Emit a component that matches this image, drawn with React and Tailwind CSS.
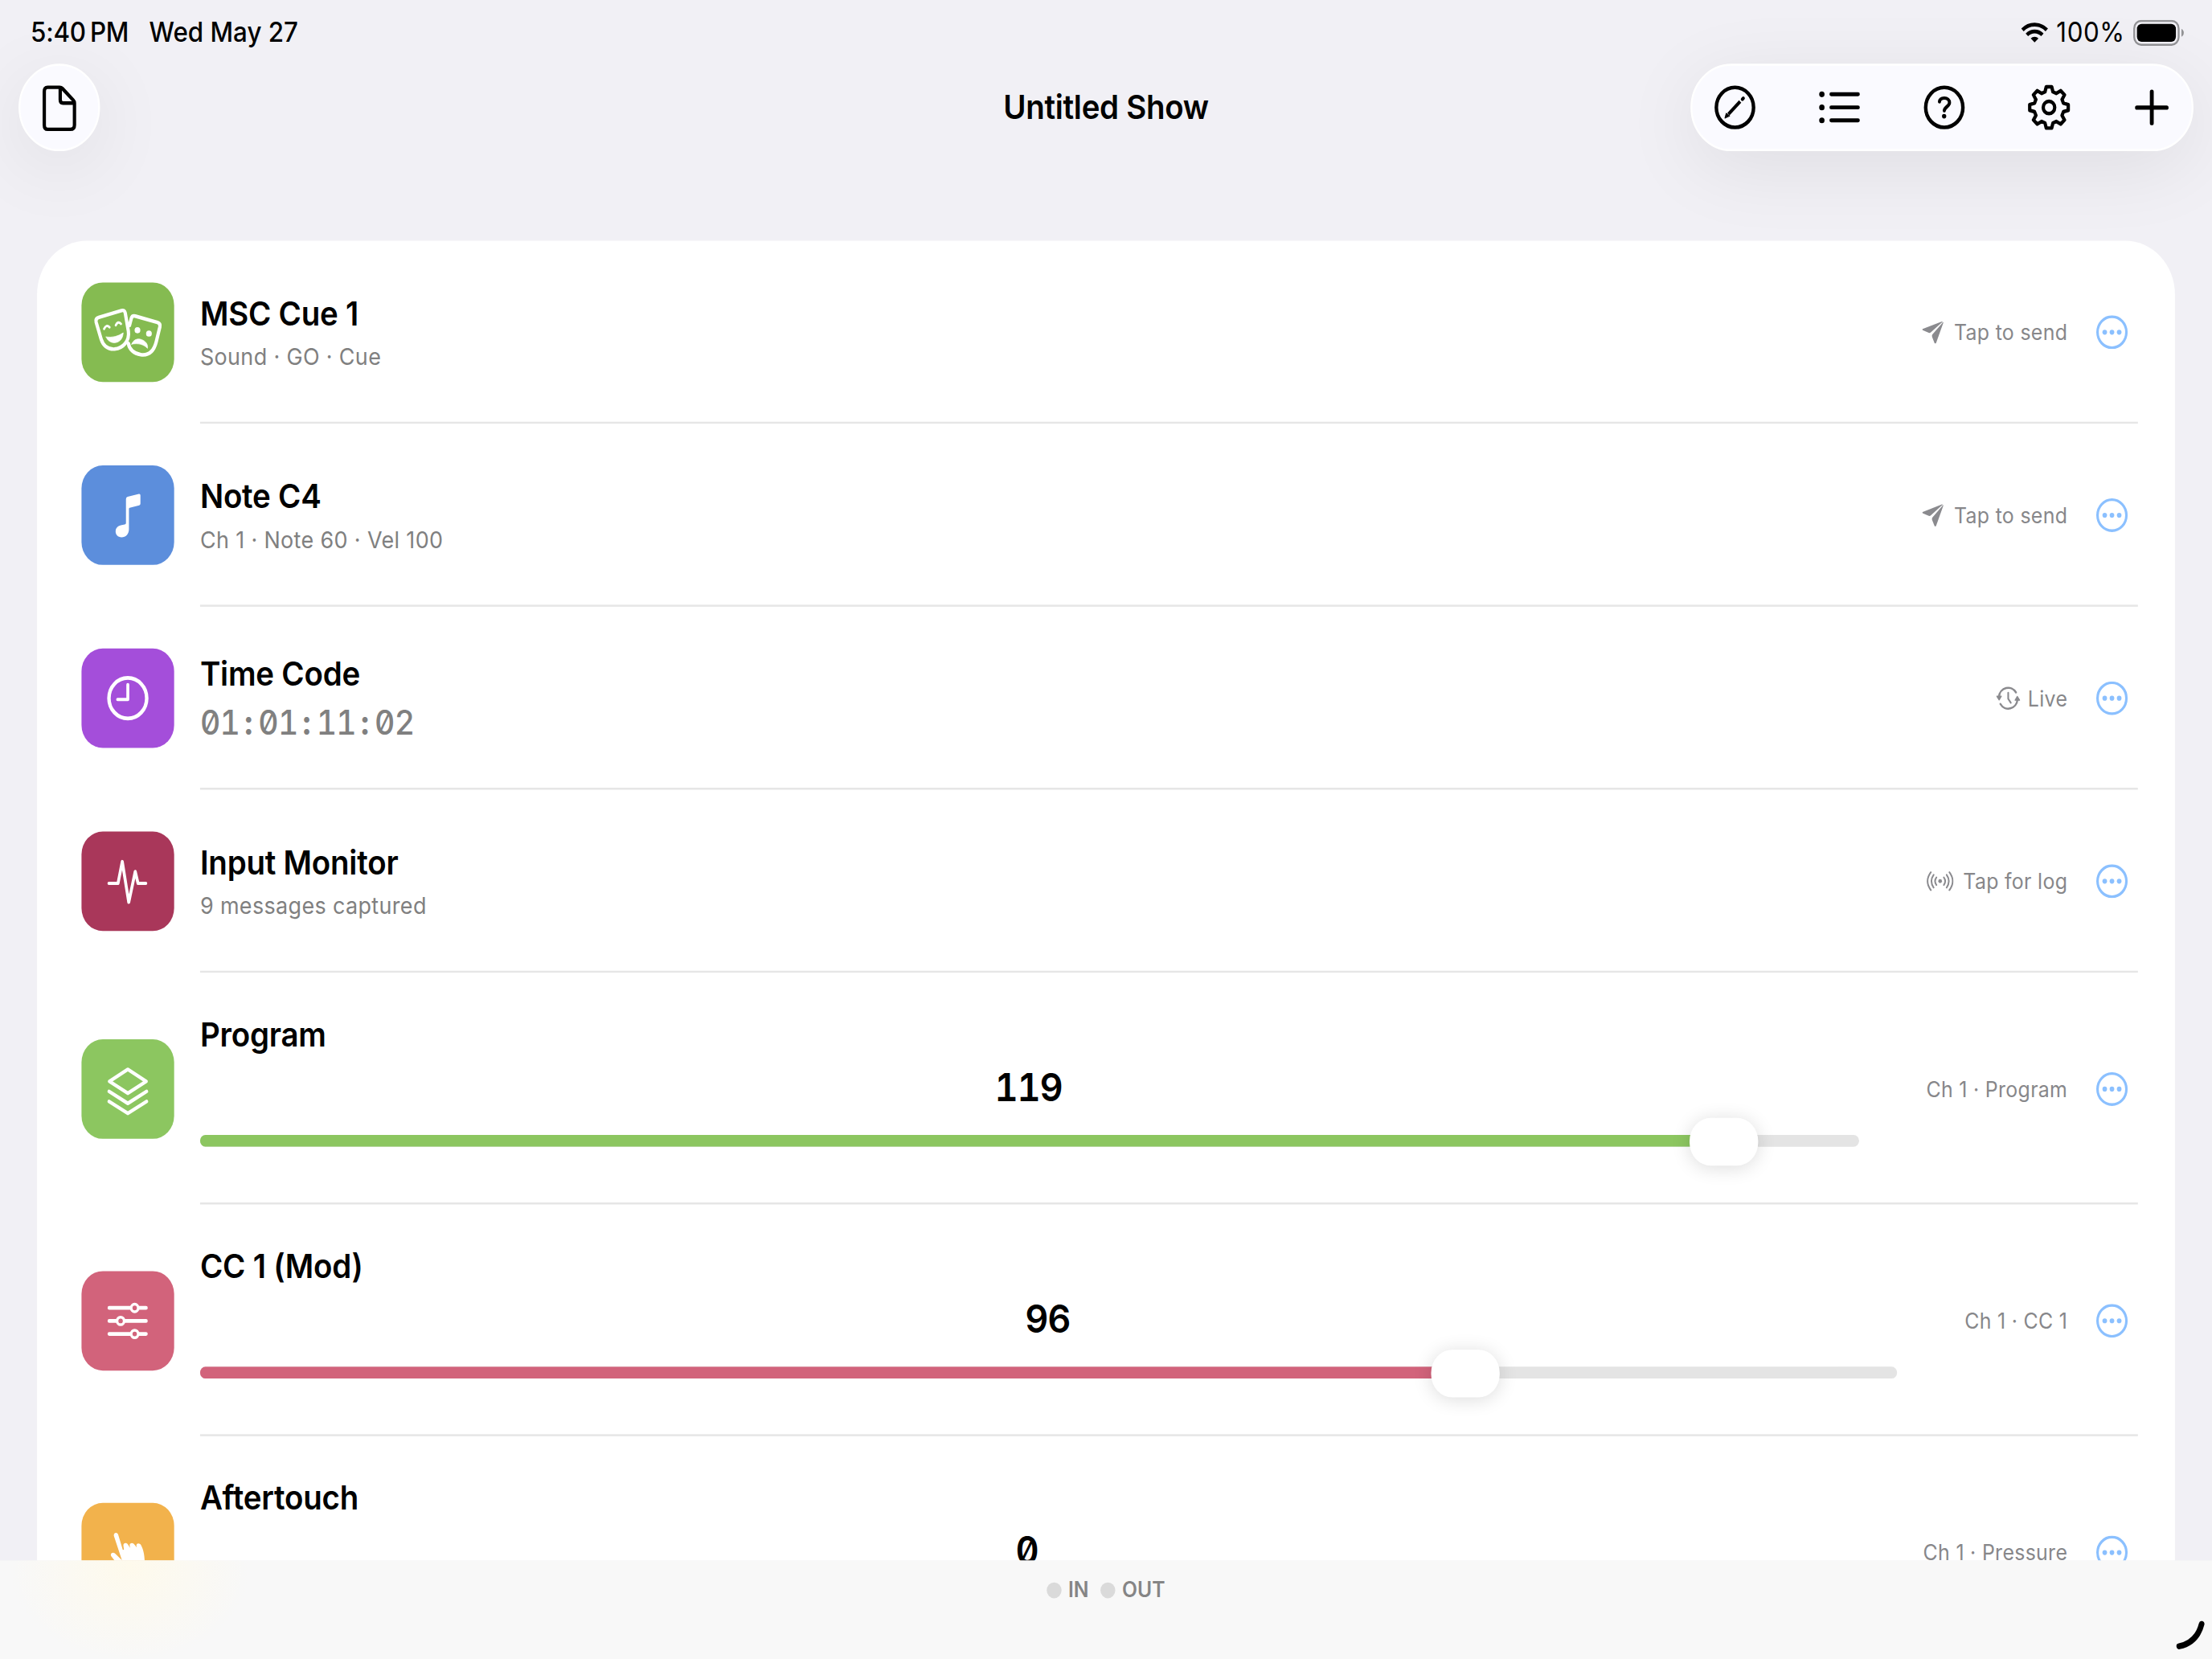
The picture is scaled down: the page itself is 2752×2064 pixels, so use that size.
const gearPoints = Array.from({ length: 8 }, (_, i) =>
  [
    [-15.5, 8.1],
    [-8, 10.5],
    [8, 10.5],
    [15.5, 8.1]
  ].map(([offset, r]) => {
    const a = ((i * 45 + offset) * Math.PI) / 180;
    return `${(12 + r * Math.sin(a)).toFixed(2)},${(12 - r * Math.cos(a)).toFixed(2)}`;
  }).join(' ')
).join(' ');

const WifiIcon = () => (
  <svg className="w-[29px] h-[21px]" viewBox="0 0 14.6 10.4" fill="none" stroke="black" strokeWidth="1.9">
    <path d="M0.7 4A9.4 9.4 0 0 1 13.9 4" />
    <path d="M3.1 6.5A6 6 0 0 1 11.5 6.5" />
    <path d="M7.3 10.3L5.2 8.3A3 3 0 0 1 9.4 8.3Z" fill="black" stroke="none" />
  </svg>
);

const BatteryIcon = () => (
  <svg className="w-[55px] h-[26px]" viewBox="0 0 27.5 13" fill="none">
    <rect x="0.5" y="0.5" width="24" height="12" rx="3.8" stroke="#939396" />
    <rect x="2" y="2" width="21" height="9" rx="2.5" fill="black" />
    <path d="M26 4.5A2.2 2.2 0 0 1 26 8.5Z" fill="#939396" />
  </svg>
);

const DocIcon = () => (
  <svg className="w-12 h-12" viewBox="0 0 24 24" fill="none" stroke="black" strokeWidth="1.8" strokeLinejoin="round">
    <path d="M5.7 1.9H12.2Q13.1 1.9 13.7 2.5L19.6 8.4Q20.2 9 20.2 9.9V20.8Q20.2 23 18 23H5.7Q3.9 23 3.9 20.8V4.1Q3.9 1.9 5.7 1.9Z" />
    <path d="M12.5 2V8.1Q12.5 9.8 14 9.8H20" />
  </svg>
);

const PencilCircleIcon = () => (
  <svg className="w-12 h-12" viewBox="0 0 24 24" fill="none" stroke="black" strokeWidth="1.9" strokeLinecap="round">
    <circle cx="12" cy="12" r="10.05" />
    <path d="M8.5 15.4L14.8 9" strokeWidth="1.7" strokeLinecap="butt" />
    <path d="M6.6 17.3L7.3 14.9L9.1 16.2Z" fill="black" stroke="black" strokeWidth="0.4" strokeLinejoin="round" />
    <path d="M16 7.9L16.5 7.4" strokeWidth="1.7" />
  </svg>
);

const ListIcon = () => (
  <svg className="w-12 h-12" viewBox="0 0 24 24" fill="none" stroke="black" strokeLinecap="round">
    <path d="M7.5 5.4H21.9M7.5 12H21.9M7.5 18.5H21.9" strokeWidth="2" />
    <path d="M2.4 5.4H2.41M2.4 12H2.41M2.4 18.5H2.41" strokeWidth="2.9" />
  </svg>
);

const HelpIcon = () => (
  <svg className="w-12 h-12" viewBox="0 0 24 24" fill="none" stroke="black" strokeWidth="1.9" strokeLinecap="round">
    <circle cx="12" cy="12" r="10.05" />
    <path d="M9.4 9.2C9.5 7.9 10.6 7.3 12 7.3C13.6 7.3 14.8 8.2 14.8 9.6C14.8 11.5 12 11.8 12 13.7" strokeWidth="1.7" />
    <circle cx="11.9" cy="16.4" r="1.15" fill="black" stroke="none" />
  </svg>
);

const GearIcon = () => (
  <svg className="w-12 h-12" viewBox="0 0 24 24" fill="none" stroke="black" strokeWidth="1.8" strokeLinejoin="round">
    <polygon points={gearPoints} />
    <circle cx="12" cy="12" r="3.1" />
  </svg>
);

const PlusIcon = () => (
  <svg className="w-11 h-12" viewBox="1 0 22 24" fill="none" stroke="black" strokeWidth="2.1" strokeLinecap="round">
    <path d="M12 4.1V19.9M4 12.1H20" />
  </svg>
);

const MasksIcon = () => (
  <g fill="none" stroke="white" strokeWidth="1.8" strokeLinejoin="round" strokeLinecap="round">
    <path d="M9.3 17.6L21.6 14.1Q23.3 13.7 23.6 15.3L25.3 24.5C26 29.3 22.6 33 17.8 33.5C14 33.7 11.6 31.5 10.6 28.5L7.9 20Q7.4 18.2 9.3 17.6Z" />
    <path d="M25.9 21.6L26.9 18Q27.4 16.5 29 16.9L41 20.1Q42.7 20.6 42.3 22.3L40.3 30C39 34.7 36 36.8 32 36.3C28.3 35.8 25.7 33.6 25.3 30.6" />
    <path d="M12.2 23.3Q13.4 20.9 15.1 22.5M18.5 21.5Q19.7 19.1 21.3 20.8" strokeWidth="1.2" />
    <path d="M13.3 27.4Q18.5 28 22.5 25.3C22.3 28.4 20.4 30.2 17.8 30.3C15.8 30.3 14 29.2 13.3 27.4Z" fill="white" strokeWidth="0.3" />
    <path d="M27.1 31C28 28.8 30 28.1 32 28.6C34.5 29.3 36 31 35.6 33.1C33.5 31 30.5 30.4 27.1 31Z" fill="white" strokeWidth="0.3" />
    <circle cx="30.2" cy="24" r="1.55" fill="white" stroke="none" />
    <circle cx="36.4" cy="25.7" r="1.55" fill="white" stroke="none" />
  </g>
);

const NoteIcon = () => (
  <path
    fill="white"
    d="M24 16.9Q24 16 24.9 15.7L31 14.3Q31.8 14.2 31.8 15V19.2Q31.8 19.9 31.1 20.1L26 21.3Q25.6 21.4 25.6 21.8V32C25.6 34.6 23.9 36.1 21.6 36.1C19.6 36.1 18.4 34.8 18.4 33.2C18.4 31.5 19.5 30.5 21.2 30.1L23.3 29.7Q24 29.5 24 28.9Z"
  />
);

const ClockIcon = () => (
  <g fill="none" stroke="white" strokeLinecap="round" strokeLinejoin="round">
    <circle cx="25" cy="25" r="10.2" strokeWidth="1.9" />
    <path d="M25 18.2V25.6H19.5" strokeWidth="1.6" />
  </g>
);

const PulseIcon = () => (
  <path
    d="M14.8 26.1H19.7L22 15.1L25.5 35.6L29 20.1L30.5 26.1H34.7"
    fill="none"
    stroke="white"
    strokeWidth="1.6"
    strokeLinecap="round"
    strokeLinejoin="round"
  />
);

const LayersIcon = () => (
  <g fill="none" stroke="white" strokeWidth="1.8" strokeLinecap="round" strokeLinejoin="round">
    <path d="M25 15.1L34.9 21.1L25 27.1L15.1 21.1Z" />
    <path d="M14.9 26.2L25 32.2L35.1 26.2M14.9 31.2L25 37.2L35.1 31.2" />
  </g>
);

const SlidersIcon = () => (
  <g fill="#d2637b" stroke="white" strokeLinecap="round">
    <path d="M15 18.5H34.8M15 25.05H34.8M15 31.6H34.8" strokeWidth="1.9" />
    <circle cx="28.7" cy="18.5" r="1.9" strokeWidth="1.4" />
    <circle cx="21.1" cy="25.05" r="1.9" strokeWidth="1.4" />
    <circle cx="28.7" cy="31.6" r="1.9" strokeWidth="1.4" />
  </g>
);

const HandIcon = () => (
  <path
    fill="white"
    d="M17.5 16.7C17.1 15 19.2 14.4 19.8 16L22.3 23.6L22.9 23.5L22.6 21.5C22.5 20 24.3 19.8 25.1 21L26.2 22.6L26 21.3C26 19.9 27.9 19.8 28.6 21L29.8 22.4L29.6 21.4C29.7 20.1 31.4 20.1 32.1 21.2C33.4 23.3 34.1 26.5 34.1 30C34.1 34 31.5 36.5 27.5 36.5C23 36.5 20.5 33.5 18 29.2L16 26.8C15.3 25.5 16.8 24.5 18 25.4L21.8 28.8Z"
  />
);

const SendIcon = () => (
  <svg className="w-6 h-6 mr-2.5" viewBox="0 0 12 12" fill="#8a8a8e">
    <path d="M11 0.5L0.3 4.4Q-0.1 4.7 0.3 5L3.6 6.3Q4.2 6.5 4.7 6.1L10.9 0.9Z" />
    <path d="M11.6 0.9L7.6 11.3Q7.2 12 6.7 11.4L5.4 8.3Q5.2 7.6 5.6 7.1L11.2 1.1Z" />
  </svg>
);

const LiveIcon = () => (
  <svg className="w-[26px] h-6 mr-2" viewBox="0 0 13 12" fill="none" stroke="#8a8a8e" strokeWidth="1.05" strokeLinecap="round">
    <path d="M1.5 5.2A5 5 0 0 1 10.7 3.1M11.5 6.8A5 5 0 0 1 2.3 8.9" />
    <path d="M0.3 5H2.8L1.6 6.9ZM10.2 7H12.7L11.4 5.1Z" fill="#8a8a8e" strokeWidth="0.5" strokeLinejoin="round" />
    <path d="M6.5 3.3V6.3L7.9 8.3" strokeWidth="0.9" />
  </svg>
);

const BroadcastIcon = () => (
  <svg className="w-[29px] h-5 mr-2.5" viewBox="0 0 14.4 10" fill="none" stroke="#8a8a8e" strokeWidth="0.85" strokeLinecap="round">
    <path d="M2.2 0.5Q-1.4 5 2.2 9.5M3.7 1.8Q1.3 5 3.7 8.2M5.2 3.1Q3.7 5 5.2 6.9" />
    <path d="M12.2 0.5Q15.8 5 12.2 9.5M10.7 1.8Q13.1 5 10.7 8.2M9.2 3.1Q10.7 5 9.2 6.9" />
    <circle cx="7.2" cy="5" r="1" fill="#8a8a8e" stroke="none" />
  </svg>
);

const MoreIcon = () => (
  <svg className="w-[34px] h-[34px] ml-[31px] shrink-0" viewBox="0 0 17 17">
    <circle cx="8.5" cy="8.5" r="7.8" fill="none" stroke="#8bc0ff" strokeWidth="1.35" />
    <circle cx="4.6" cy="8.5" r="1.25" fill="#8bc0ff" />
    <circle cx="8.5" cy="8.5" r="1.25" fill="#8bc0ff" />
    <circle cx="12.4" cy="8.5" r="1.25" fill="#8bc0ff" />
  </svg>
);

const cues = [
  { title: 'MSC Cue 1', subtitle: 'Sound · GO · Cue', tile: 'bg-[#85bb51]', Icon: MasksIcon, hint: 'Tap to send', HintIcon: SendIcon },
  { title: 'Note C4', subtitle: 'Ch 1 · Note 60 · Vel 100', tile: 'bg-[#5c8edc]', Icon: NoteIcon, hint: 'Tap to send', HintIcon: SendIcon },
  { title: 'Time Code', timecode: '01:01:11:02', tile: 'bg-[#a44eda]', Icon: ClockIcon, hint: 'Live', HintIcon: LiveIcon },
  { title: 'Input Monitor', subtitle: '9 messages captured', tile: 'bg-[#a9375a]', Icon: PulseIcon, hint: 'Tap for log', HintIcon: BroadcastIcon },
  { title: 'Program', value: 119, tile: 'bg-[#8cc660]', Icon: LayersIcon, hint: 'Ch 1 · Program' },
  { title: 'CC 1 (Mod)', value: 96, tile: 'bg-[#d2637b]', Icon: SlidersIcon, hint: 'Ch 1 · CC 1' },
  { title: 'Aftertouch', value: 0, tile: 'bg-[#f2b24c]', Icon: HandIcon, hint: 'Ch 1 · Pressure' }
];

// Every character sits in a cell of the same width, colons included
const Timecode = ({ text }) => (
  <div className="h-11 leading-[44px] text-[34px] font-medium text-[#808080] [font-feature-settings:'tnum','zero']">
    {text.split(/(:)/).map((part, i) =>
      part === ':' ? (
        <span key={i} className="inline-block w-[21px] text-center font-bold">:</span>
      ) : (
        <span key={i} className="inline-block w-[41.8px] tracking-[-0.6px]">{part}</span>
      )
    )}
  </div>
);

const Slider = ({ value, color }) => {
  const ratio = value / 127;
  return (
    <div className="relative h-12 flex items-center">
      <div className="w-full h-3 -mt-px rounded-full bg-[#e4e4e4] overflow-hidden">
        <div className={`h-full ${color}`} style={{ width: `${ratio * 100}%` }} />
      </div>
      <div
        className="absolute top-0 w-[74px] h-12 rounded-[23px] bg-white shadow-[0_2px_20px_rgba(0,0,0,0.14)]"
        style={{ left: `calc((100% - 74px) * ${ratio})` }}
      />
    </div>
  );
};

const CueRow = ({ cue, last }) => {
  const { title, subtitle, timecode, value, tile, Icon, hint, HintIcon } = cue;
  const hasSlider = value !== undefined;
  return (
    <div className={`flex pl-12 pr-10 shrink-0 ${hasSlider ? 'h-[233px]' : 'h-[184px]'}`}>
      <div className={`self-center w-[100px] h-[100px] mr-7 rounded-[23px] shrink-0 ${tile}`}>
        <svg className="w-full h-full" viewBox="0 0 50 50">
          <Icon />
        </svg>
      </div>
      <div className={`flex-1 flex items-center pt-0.5 pr-[11px] border-b-2 ${last ? 'border-transparent' : 'border-[#e6e6e6]'}`}>
        <div className={`flex-1 flex flex-col ${hasSlider ? 'gap-[7px]' : 'gap-1.5'}`}>
          <div className="h-11 leading-[44px] text-[33.4px] font-semibold tracking-[-0.2px] text-black">{title}</div>
          {subtitle && <div className="h-8 leading-8 text-[23.4px] tracking-[0.3px] text-[#808080]">{subtitle}</div>}
          {timecode && <Timecode text={timecode} />}
          {hasSlider && (
            <>
              <div className="h-12 pr-0.5 leading-[48px] text-center text-[39.2px] tracking-[-1px] font-semibold text-black [font-feature-settings:'tnum','zero']">
                {value}
              </div>
              <Slider value={value} color={tile} />
            </>
          )}
        </div>
        <div className={`flex items-center ${hasSlider ? 'ml-[73px]' : ''}`}>
          {HintIcon && <HintIcon />}
          <span className="leading-7 text-[21.6px] tracking-[0.27px] text-[#87878a]">{hint}</span>
        </div>
        <MoreIcon />
      </div>
    </div>
  );
};

const StatusBar = () => (
  <div className="h-16 pt-px pl-[33px] pr-[30px] flex items-center justify-between text-[27.2px] leading-8 font-medium text-black shrink-0">
    <div className="flex gap-[22px]">
      <span className="tracking-[-0.2px]">5:40&#8201;PM</span>
      <span>Wed May 27</span>
    </div>
    <div className="flex items-center">
      <WifiIcon />
      <span className="ml-[9px] mr-[9px] font-normal tracking-[0.5px]">100%</span>
      <BatteryIcon />
    </div>
  </div>
);

const Toolbar = () => (
  <div className="h-[88px] px-5 grid grid-cols-[1fr_auto_1fr] items-center shrink-0">
    <button className="w-[88px] h-[88px] rounded-full flex items-center justify-center bg-[#fafaff] border-2 border-white shadow-[0_16px_80px_rgba(0,0,0,0.08)]">
      <DocIcon />
    </button>
    <h1 className="h-11 leading-[44px] text-[33.4px] font-semibold tracking-[-0.25px] text-black">Untitled Show</h1>
    <div className="justify-self-end w-[543px] h-[88px] pl-[22px] pr-[21px] rounded-full flex items-center justify-between bg-[#fafaff] border-2 border-white shadow-[0_16px_80px_rgba(0,0,0,0.08)]">
      <PencilCircleIcon />
      <ListIcon />
      <HelpIcon />
      <GearIcon />
      <PlusIcon />
    </div>
  </div>
);

const MidiIndicator = ({ label }) => (
  <div className="flex items-center gap-[7px]">
    <span className="w-4 h-4 rounded-full bg-[#dadada]" />
    <span className="-mt-px text-[21.4px] font-semibold leading-6 text-[#858585]">{label}</span>
  </div>
);

const App = () => {
  return (
    <div className="w-full h-screen overflow-hidden">
      <div className="w-[2388px] h-[1668px] origin-top-left scale-x-[1.15243] scale-y-[1.23741] flex flex-col overflow-hidden bg-[#f1f0f5] font-['Inter','Liberation_Sans',sans-serif]">
        <StatusBar />
        <Toolbar />
        <main className="flex-1 min-h-0 mt-[90px] mx-10 flex flex-col overflow-hidden rounded-t-[54px] bg-white">
          {cues.map((cue, i) => (
            <CueRow key={cue.title} cue={cue} last={i === cues.length - 1} />
          ))}
        </main>
        <footer className="relative h-[99px] shrink-0 pt-[18px] flex justify-center items-start gap-[13px] bg-[#f8f8f8] bg-[radial-gradient(ellipse_130px_96px_at_140px_6px,#fefaec,#fefaec00)]">
          <MidiIndicator label="IN" />
          <MidiIndicator label="OUT" />
          <svg className="absolute right-0 bottom-0 w-12 h-12" viewBox="0 0 24 24" fill="none" stroke="black" strokeWidth="3" strokeLinecap="round">
            <path d="M6.3 17.6Q15.8 15.8 18.4 6.4" />
          </svg>
        </footer>
      </div>
    </div>
  );
};

export default App;
